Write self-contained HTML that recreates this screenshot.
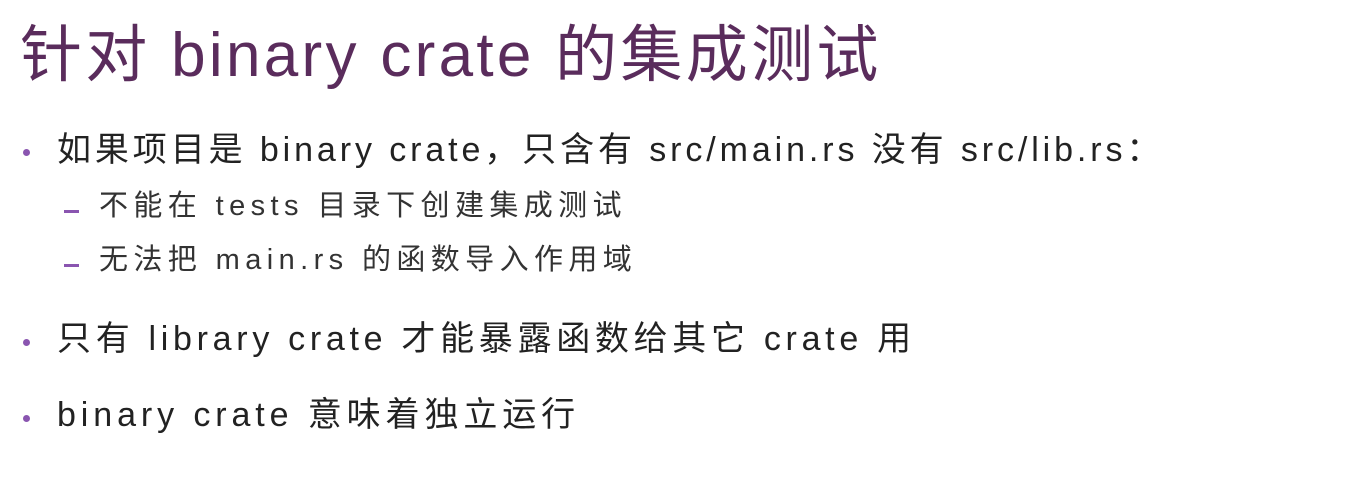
<!DOCTYPE html>
<html><head><meta charset="utf-8"><style>
body{margin:0;width:1348px;height:486px;background:#fff;overflow:hidden;font-family:"Liberation Sans","Noto Sans CJK SC",sans-serif;position:relative}
div{position:absolute;white-space:nowrap}
.t{left:20px;top:16px;font-size:62px;color:#5a2c5c;line-height:80px;letter-spacing:3.3px}
.b{font-size:34px;color:#222;line-height:40px;letter-spacing:3.9px}
.s{font-size:29px;color:#333;line-height:36px;letter-spacing:5.4px}
.dot{position:absolute;width:7px;height:7px;border-radius:50%;background:#8a55b0}
.dash{position:absolute;width:15px;height:3px;background:#8a55b0}
</style></head><body>
<div class="t">针对 binary crate 的集成测试</div>
<span class="dot" style="left:23px;top:149px"></span>
<div class="b" style="left:57px;top:130px">如果项目是 binary crate，只含有 src/main.rs 没有 src/lib.rs：</div>
<span class="dash" style="left:64px;top:210px"></span>
<div class="s" style="left:99px;top:188px">不能在 tests 目录下创建集成测试</div>
<span class="dash" style="left:64px;top:264px"></span>
<div class="s" style="left:99px;top:242px">无法把 main.rs 的函数导入作用域</div>
<span class="dot" style="left:23px;top:339px"></span>
<div class="b" style="left:57px;top:319px;letter-spacing:4.7px">只有 library crate 才能暴露函数给其它 crate 用</div>
<span class="dot" style="left:23px;top:415px"></span>
<div class="b" style="left:57px;top:395px;letter-spacing:4.9px">binary crate 意味着独立运行</div>
</body></html>
